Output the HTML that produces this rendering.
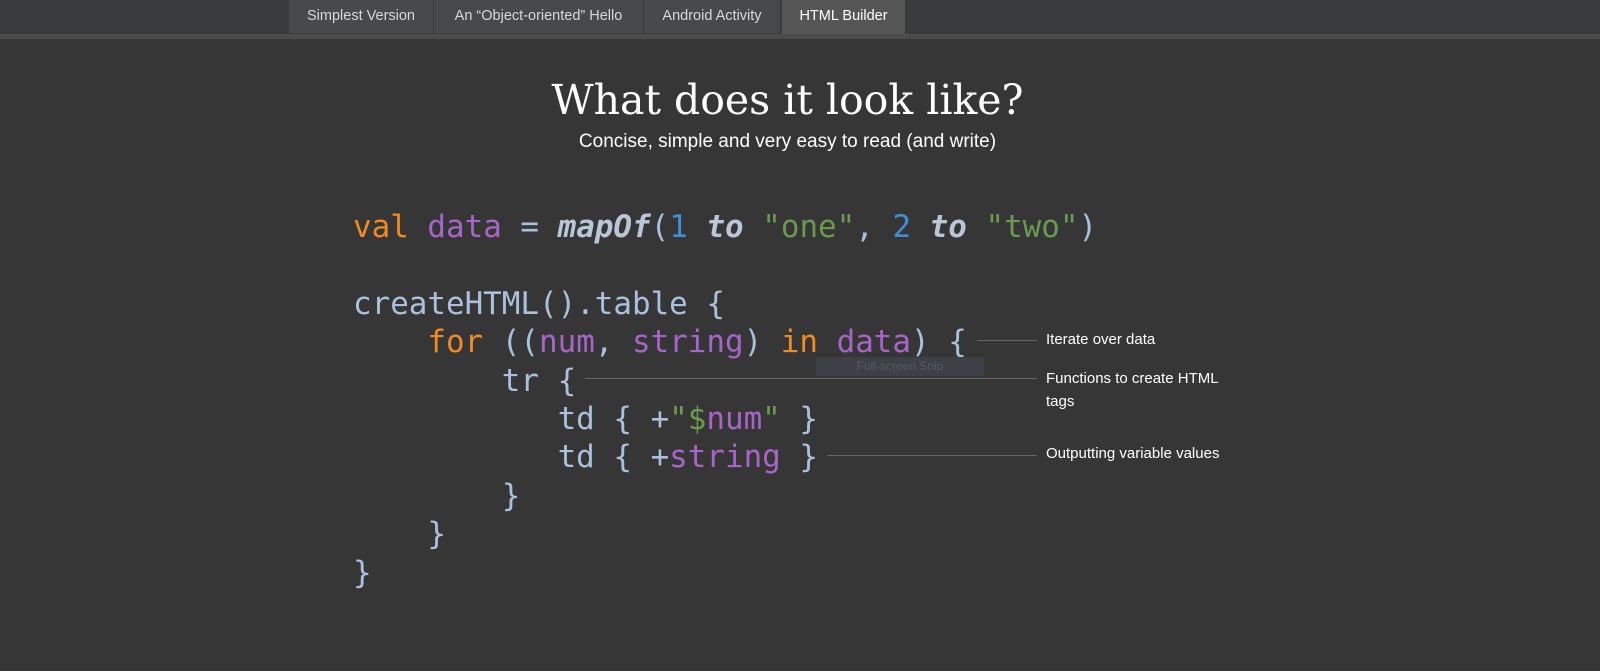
<!DOCTYPE html>
<html><head><meta charset="utf-8"><style>
body{margin:0;width:1600px;height:671px;background:#363636;overflow:hidden;position:relative;font-family:"Liberation Sans","DejaVu Sans",sans-serif}
.bar{position:absolute;left:0;top:0;width:1600px;height:34px;background:#3a3b3d}
.line{position:absolute;left:0;top:34px;width:1600px;height:5px;background:#4b4c4b}
.tab{position:absolute;top:0;height:33px;line-height:32px;text-align:center;font-size:14.5px;color:#d8d8d8;background:#474a4d;border-right:1px solid #3a3b3d}
.tab.a{background:#565656;color:#fff;height:34px}
h1{position:absolute;top:76px;left:0;width:1575px;margin:0;text-align:center;font:41px "DejaVu Serif","Liberation Serif",serif;color:#fff;font-weight:normal}
.sub{position:absolute;top:131px;left:0;width:1575px;text-align:center;font-size:19px;color:#fff}
pre{position:absolute;left:353px;top:208px;margin:0;font:30.9px/38.4px "DejaVu Sans Mono",monospace;color:#a9c1dc}
.k{color:#f08a24}.v{color:#a865c9}.n{color:#3d8fd6}.s{color:#6a9a4f}.i{font-style:italic;font-weight:bold;color:#b8c6d6}
.ann{position:absolute;color:#fff;font-size:15px;line-height:23px}
.hl{position:absolute;height:1px;background:#666}
.snip{position:absolute;left:816px;top:357px;width:168px;height:19px;background:#3d4145;color:#555a60;font-size:12px;text-align:center;line-height:19px}
</style></head><body>
<div class="bar"></div><div class="line"></div>
<div class="tab" style="left:289px;width:144px">Simplest Version</div>
<div class="tab" style="left:434px;width:209px">An “Object-oriented” Hello</div>
<div class="tab" style="left:644px;width:136px">Android Activity</div>
<div class="tab a" style="left:782px;width:123px">HTML Builder</div>
<h1>What does it look like?</h1>
<div class="sub">Concise, simple and very easy to read (and write)</div>
<pre><span class="k">val</span> <span class="v">data</span> = <span class="i">mapOf</span>(<span class="n">1</span> <span class="i">to</span> <span class="s">"one"</span>, <span class="n">2</span> <span class="i">to</span> <span class="s">"two"</span>)

createHTML().table {
    <span class="k">for</span> ((<span class="v">num</span>, <span class="v">string</span>) <span class="k">in</span> <span class="v">data</span>) {
        tr {
           td { +<span class="s">"$</span><span class="v">num</span><span class="s">"</span> }
           td { +<span class="v">string</span> }
        }
    }
}</pre>
<div class="snip">Full-screen Snip</div>
<div class="hl" style="left:977px;top:340px;width:60px"></div>
<div class="hl" style="left:585px;top:378px;width:452px"></div>
<div class="hl" style="left:827px;top:455px;width:210px"></div>
<div class="ann" style="left:1046px;top:328px">Iterate over data</div>
<div class="ann" style="left:1046px;top:367px;width:190px">Functions to create HTML tags</div>
<div class="ann" style="left:1046px;top:442px">Outputting variable values</div>
</body></html>
